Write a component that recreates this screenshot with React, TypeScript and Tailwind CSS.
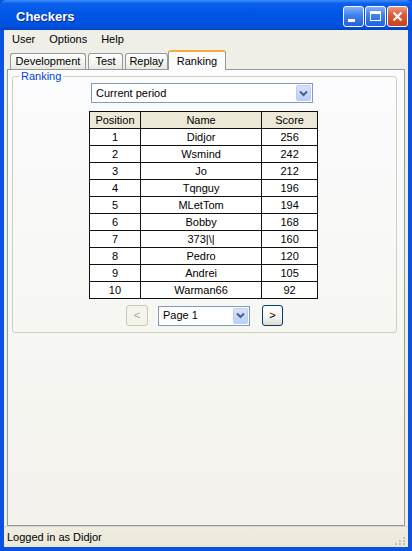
import React from "react";

const rows: [number, string, number][] = [
  [1, "Didjor", 256],
  [2, "Wsmind", 242],
  [3, "Jo", 212],
  [4, "Tqnguy", 196],
  [5, "MLetTom", 194],
  [6, "Bobby", 168],
  [7, "373|\\|", 160],
  [8, "Pedro", 120],
  [9, "Andrei", 105],
  [10, "Warman66", 92],
];

function Chevron() {
  return (
    <svg width="9" height="7" viewBox="0 0 9 7">
      <path d="M1 1.5 L4.5 5 L8 1.5" fill="none" stroke="#4d6185" strokeWidth="2" />
    </svg>
  );
}

function Combo({ text, w }: { text: string; w: string }) {
  return (
    <div className={`${w} h-[20px] border border-[#7f9db9] bg-white flex items-center`}>
      <span className="pl-[4px] flex-1 text-[11px] leading-none text-black">{text}</span>
      <div className="w-[15px] h-[16px] mr-[1px] rounded-[2px] border border-[#b9cdf8] bg-[linear-gradient(180deg,#d6e2fd_0%,#bdd0fa_100%)] flex items-center justify-center">
        <Chevron />
      </div>
    </div>
  );
}

function TitleButton({ kind }: { kind: "min" | "max" | "close" }) {
  const base =
    "w-[21px] h-[21px] rounded-[3px] border border-white flex items-center justify-center";
  if (kind === "close") {
    return (
      <div className={`${base} bg-[linear-gradient(180deg,#e99a82_0%,#de5a35_40%,#c9411c_100%)]`}>
        <svg width="11" height="11" viewBox="0 0 11 11">
          <path d="M1.5 1.5 L9.5 9.5 M9.5 1.5 L1.5 9.5" stroke="white" strokeWidth="2.2" />
        </svg>
      </div>
    );
  }
  return (
    <div className={`${base} bg-[linear-gradient(180deg,#7fb0fb_0%,#3f7fee_45%,#2361de_100%)]`}>
      {kind === "min" ? (
        <div className="w-[7px] h-[3px] bg-white mt-[8px] -ml-[5px]" />
      ) : (
        <div className="w-[11px] h-[10px] border border-white border-t-[3px]" />
      )}
    </div>
  );
}

export default function App() {
  return (
    <div
      className="w-[412px] h-[551px] flex flex-col bg-[#0a53e0] overflow-hidden"
      style={{ fontFamily: '"Liberation Sans", Arial, sans-serif' }}
    >
      {/* Title bar */}
      <div className="h-[30px] flex items-center bg-[linear-gradient(180deg,#3d8dfd_0%,#0a60eb_12%,#0055e5_45%,#0052e0_85%,#0043c8_100%)] rounded-t-[6px]">
        <span className="pl-[16px] pt-[2px] text-white font-bold text-[13px] leading-none [text-shadow:1px_1px_0_#0a2a9a]">
          Checkers
        </span>
        <div className="ml-auto mr-[4px] flex gap-[1px] mt-[2px]">
          <TitleButton kind="min" />
          <TitleButton kind="max" />
          <TitleButton kind="close" />
        </div>
      </div>

      {/* Window body */}
      <div className="flex-1 mx-[4px] mb-[4px] flex flex-col bg-[#efeee7]">
        {/* Menu */}
        <div className="h-[19px] flex items-center pl-[1px] text-[11px] text-black">
          <span className="px-[7px]">User</span>
          <span className="px-[7px]">Options</span>
          <span className="px-[7px]">Help</span>
        </div>

        {/* Tabs */}
        <div className="relative z-10 h-[21px] flex items-end ml-[6px] text-[11px] text-black">
          <div className="w-[76px] h-[16px] mb-[1px] mr-[2px] border border-b-0 border-[#919b9c] rounded-t-[3px] bg-[linear-gradient(180deg,#fefefe_0%,#f4f3ee_60%,#e8e7e0_100%)] flex items-center justify-center">
            Development
          </div>
          <div className="w-[35px] h-[16px] mb-[1px] mr-[2px] border border-b-0 border-[#919b9c] rounded-t-[3px] bg-[linear-gradient(180deg,#fefefe_0%,#f4f3ee_60%,#e8e7e0_100%)] flex items-center justify-center">
            Test
          </div>
          <div className="w-[43px] h-[16px] mb-[1px] border border-b-0 border-[#919b9c] rounded-t-[3px] bg-[linear-gradient(180deg,#fefefe_0%,#f4f3ee_60%,#e8e7e0_100%)] flex items-center justify-center">
            Replay
          </div>
          <div className="w-[58px] h-[20px] border border-b-0 border-[#919b9c] border-t-2 border-t-[#f5ac3a] rounded-t-[3px] bg-[#fcfcfe] flex items-center justify-center">
            Ranking
          </div>
        </div>

        {/* Tab panel */}
        <div className="-mt-[1px] mx-[3px] flex-1 border border-[#919b9c] bg-[linear-gradient(180deg,#fcfcfe_0%,#f7f7f4_50%,#f3f2ec_100%)] pl-[4px] pr-[7px]">
          <fieldset className="border border-[#d0d0bf] rounded-[3px] pb-[6px] flex flex-col">
            <legend className="ml-[6px] px-[2px] text-[11px] leading-[13px] text-[#0046d5]">
              Ranking
            </legend>
            <div className="ml-[78px]">
              <Combo text="Current period" w="w-[222px]" />
            </div>
            <table className="ml-[76px] mt-[8px] border-collapse border border-[#111] text-[11px] text-black w-[229px]">
              <thead>
                <tr className="h-[17px] bg-[#ece9d8]">
                  <th className="w-[51px] border border-[#111] font-normal p-0 leading-none">Position</th>
                  <th className="w-[122px] border border-[#111] font-normal p-0 leading-none">Name</th>
                  <th className="w-[56px] border border-[#111] font-normal p-0 leading-none">Score</th>
                </tr>
              </thead>
              <tbody className="bg-white">
                {rows.map(([p, n, s]) => (
                  <tr key={p} className="h-[17px]">
                    <td className="border border-[#111] text-center p-0 leading-none">{p}</td>
                    <td className="border border-[#111] text-center p-0 leading-none">{n}</td>
                    <td className="border border-[#111] text-center p-0 leading-none">{s}</td>
                  </tr>
                ))}
              </tbody>
            </table>
            <div className="ml-[113px] mt-[6px] flex items-center">
              <div className="w-[22px] h-[21px] rounded-[3px] border border-[#c9c7ba] bg-[#f5f4ea] text-[#aca899] text-[11px] flex items-center justify-center">
                &lt;
              </div>
              <div className="ml-[10px]">
                <Combo text="Page 1" w="w-[92px]" />
              </div>
              <div className="ml-[12px] w-[21px] h-[21px] rounded-[3px] border border-[#003c74] bg-[linear-gradient(180deg,#ffffff_0%,#f4f3ee_60%,#dedbcd_100%)] text-black text-[11px] flex items-center justify-center">
                &gt;
              </div>
            </div>
          </fieldset>
        </div>

        {/* Status bar */}
        <div className="h-[21px] flex items-center border-t border-[#d8d5c6] bg-[linear-gradient(180deg,#efede2_0%,#ece9d8_100%)] pl-[3px] text-[11px] text-black">
          <span>Logged in as Didjor</span>
          <div className="ml-auto mr-[2px] self-end mb-[2px] grid grid-cols-3 gap-[1px] w-[11px]">
            <span />
            <span />
            <span className="w-[2px] h-[2px] bg-[#c5c2b2]" />
            <span />
            <span className="w-[2px] h-[2px] bg-[#c5c2b2]" />
            <span className="w-[2px] h-[2px] bg-[#c5c2b2]" />
            <span className="w-[2px] h-[2px] bg-[#c5c2b2]" />
            <span className="w-[2px] h-[2px] bg-[#c5c2b2]" />
            <span className="w-[2px] h-[2px] bg-[#c5c2b2]" />
          </div>
        </div>
      </div>
    </div>
  );
}
